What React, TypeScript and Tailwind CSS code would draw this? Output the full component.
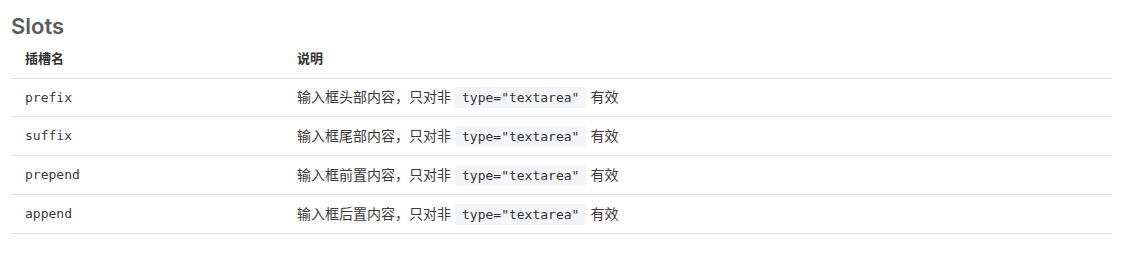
const rows = [
  { name: 'prefix', desc: '输入框头部内容，只对非' },
  { name: 'suffix', desc: '输入框尾部内容，只对非' },
  { name: 'prepend', desc: '输入框前置内容，只对非' },
  { name: 'append', desc: '输入框后置内容，只对非' },
];

const sans = "font-['Inter','Noto_Sans_CJK_SC',sans-serif]";

export default function App() {
  return (
    <div className={`${sans} bg-white h-[268px] pl-[11px] pt-[12px]`}>
      <h2 className="text-[22px] leading-[28px] font-semibold text-[#5c5c5c]">Slots</h2>

      <table className="w-[1101px] mt-[-1px] border-collapse text-[14px] text-[#3a3a3a]">
        <thead>
          <tr className="h-[39px] border-b border-[#dfdfe5]">
            <th className="w-[272px] pl-[14px] text-left font-bold text-[13px] text-[#333]">插槽名</th>
            <th className="pl-[14px] text-left font-bold text-[13px] text-[#333]">说明</th>
          </tr>
        </thead>
        <tbody>
          {rows.map(row => (
            <tr key={row.name} className="h-[38.75px] border-b border-[#dfdfe5]">
              <td className="pl-[14px] font-['DejaVu_Sans_Mono',monospace] text-[13px] text-[#3a3a3a]">
                {row.name}
              </td>
              <td className="pl-[14px] text-[14px]">
                {row.desc}
                <code className="mx-[4px] inline-block px-[7px] leading-[21px] rounded-[4px] bg-[#f4f5f8] font-['DejaVu_Sans_Mono',monospace] text-[13px] text-[#333]">
                  type="textarea"
                </code>
                有效
              </td>
            </tr>
          ))}
        </tbody>
      </table>
    </div>
  );
}
